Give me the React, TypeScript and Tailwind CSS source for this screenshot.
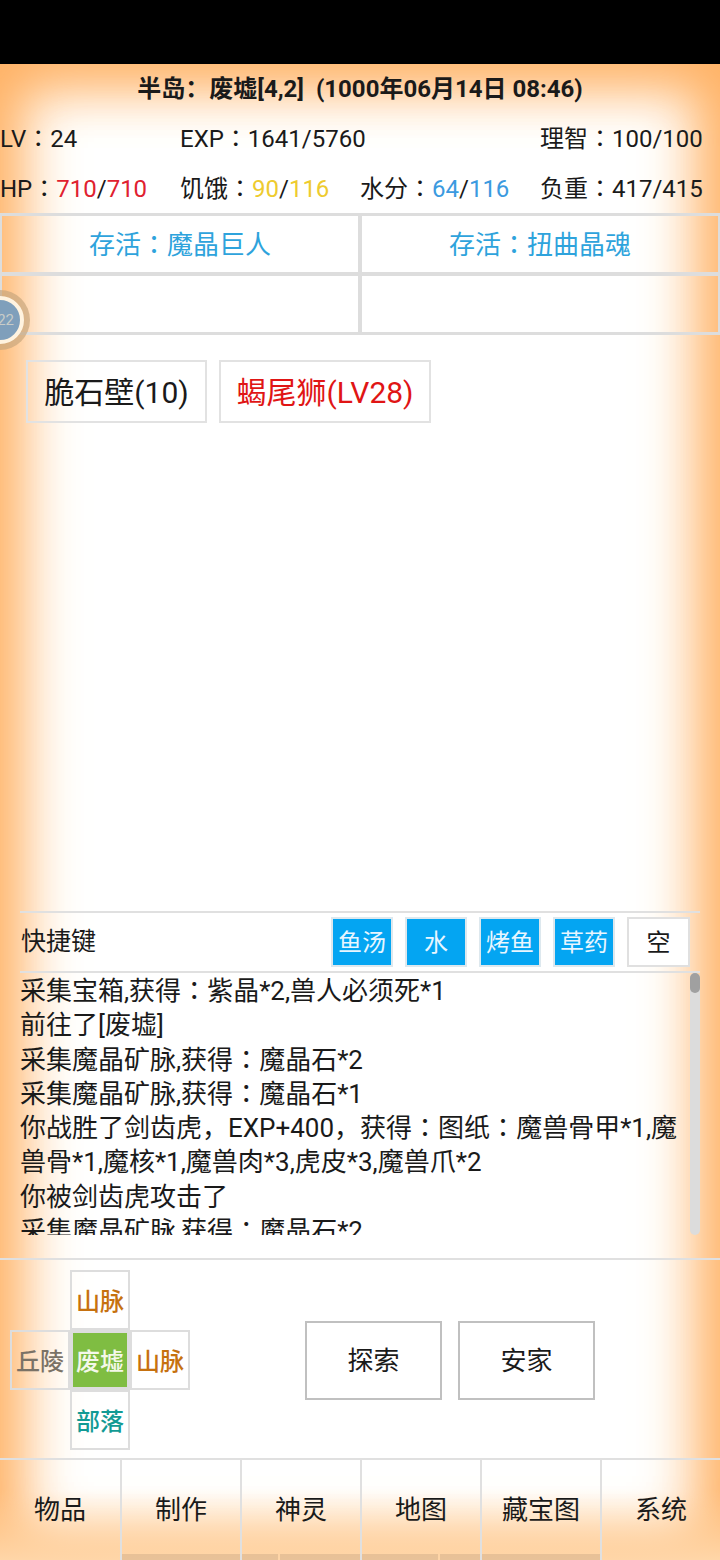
const FONT = "font-['Roboto','Noto_Sans_CJK_SC',sans-serif]";

const LOG_LINES = [
  '采集宝箱,获得：紫晶*2,兽人必须死*1',
  '前往了[废墟]',
  '采集魔晶矿脉,获得：魔晶石*2',
  '采集魔晶矿脉,获得：魔晶石*1',
  '你战胜了剑齿虎，EXP+400，获得：图纸：魔兽骨甲*1,魔兽骨*1,魔核*1,魔兽肉*3,虎皮*3,魔兽爪*2',
  '你被剑齿虎攻击了',
  '采集魔晶矿脉,获得：魔晶石*2',
];

const SHORTCUTS = ['鱼汤', '水', '烤鱼', '草药'];
const NAV = ['物品', '制作', '神灵', '地图', '藏宝图', '系统'];

// the game's colon sits centred in its cell, which is the TC glyph
function Colon() {
  return <span className="font-['Noto_Sans_CJK_TC',sans-serif] leading-[0]">：</span>;
}

function withColons(text: string) {
  const parts = text.split('：');
  return parts.map((p, i) => (
    <span key={i}>
      {i > 0 && <Colon />}
      {p}
    </span>
  ));
}

function MapCell({ label, color }: { label: string; color: string }) {
  return (
    <div className={`h-[60px] w-[60px] pt-[3px] border-2 border-[#dddddd] flex items-center justify-center text-[24px] font-medium ${color}`}>
      {label}
    </div>
  );
}

export default function App() {
  return (
    <div className={`${FONT} w-[720px] h-[1560px] bg-black text-[#1a1a1a] overflow-hidden`}>
      <div className="h-[64px] bg-black" />
      <div className="relative h-[1496px] bg-white shadow-[inset_10px_0_70px_#ffb265,inset_-10px_0_70px_#ffb265,inset_0_14px_60px_#ffd0a0] flex flex-col">
        {/* Header */}
        <div className="h-[48px] pt-[2px] flex items-center justify-center text-[24px] font-bold whitespace-pre">
          半岛：废墟[4,2]  (1000年06月14日 08:46)
        </div>
        <div className="grid grid-cols-4 h-[50px] pt-[3px] items-center text-[24px] whitespace-nowrap">
          <div>LV<Colon />24</div>
          <div className="col-span-2">EXP<Colon />1641/5760</div>
          <div>理智<Colon />100/100</div>
        </div>
        <div className="grid grid-cols-4 h-[50px] pt-[3px] items-center text-[24px] whitespace-nowrap">
          <div>HP<Colon /><span className="text-[#e0212f]">710</span>/<span className="text-[#e0212f]">710</span></div>
          <div>饥饿<Colon /><span className="text-[#eecb2e]">90</span>/<span className="text-[#eecb2e]">116</span></div>
          <div>水分<Colon /><span className="text-[#3b9ae0]">64</span>/<span className="text-[#3b9ae0]">116</span></div>
          <div>负重<Colon />417/415</div>
        </div>

        {/* Quests */}
        <div className="grid grid-cols-2 mt-[1px]">
          <div className="h-[61px] pt-[3px] border-2 border-t-[3px] border-[#dddddd] flex items-center justify-center text-[26px] text-[#2ea3dc]"><span>存活<Colon />魔晶巨人</span></div>
          <div className="h-[61px] pt-[3px] border-2 border-t-[3px] border-[#dddddd] flex items-center justify-center text-[26px] text-[#2ea3dc]"><span>存活<Colon />扭曲晶魂</span></div>
          <div className="h-[61px] border-2 border-b-[3px] border-[#dddddd]" />
          <div className="h-[61px] border-2 border-b-[3px] border-[#dddddd]" />
        </div>

        {/* Targets */}
        <div className="flex gap-3 pl-[26px] mt-[25px] text-[30px]">
          <div className="h-[63px] w-[181px] pt-[2px] border-2 border-[#e2e2e2] flex items-center justify-center whitespace-nowrap">脆石壁(10)</div>
          <div className="h-[63px] w-[212px] pt-[2px] border-2 border-[#e2e2e2] flex items-center justify-center whitespace-nowrap text-[#e01515]">蝎尾狮(LV28)</div>
        </div>

        {/* Shortcuts */}
        <div className="mt-[488px] mx-[20px] h-[62px] border-y-2 border-[#e0e0e0] flex items-center">
          <div className="flex-1 text-[25px] pl-[1px] pb-[1px]">快捷键</div>
          <div className="flex gap-[12px] pr-[10px]">
            {SHORTCUTS.map((s) => (
              <div key={s} className="h-[50px] w-[62px] pt-[2px] bg-[#04a5f2] border-2 border-[#dde8ee] flex items-center justify-center text-[24px] text-[#e8f6ff]">{s}</div>
            ))}
            <div className="h-[50px] w-[63px] pt-[2px] bg-white border-2 border-[#e0e0e0] flex items-center justify-center text-[24px]">空</div>
          </div>
        </div>

        {/* Log */}
        <div className="relative mx-[20px] h-[262px] overflow-hidden pt-[1px] pr-[10px] text-[26px] leading-[34.3px]">
          {LOG_LINES.map((l, i) => <div key={i}>{withColons(l)}</div>)}
          <div className="absolute right-0 top-0 bottom-0 w-[10px] bg-[#dcdcdc] rounded-[5px]">
            <div className="h-[20px] w-[10px] bg-[#a0a0a0] rounded-[5px]" />
          </div>
        </div>

        {/* Map and actions */}
        <div className="mt-[23px] h-[200px] border-t-2 border-[#e0e0e0] flex items-start">
          <div className="grid grid-cols-[60px_60px_60px] ml-[10px] mt-[10px]">
            <div />
            <MapCell label="山脉" color="text-[#c6710f]" />
            <div />
            <MapCell label="丘陵" color="text-[#7a7266]" />
            <div className="h-[60px] w-[60px] pt-[3px] border-[3px] border-[#dddddd] bg-[#7fbd42] flex items-center justify-center text-[24px] font-medium text-[#f4f8ea]">废墟</div>
            <MapCell label="山脉" color="text-[#c6710f]" />
            <div />
            <MapCell label="部落" color="text-[#129a94]" />
            <div />
          </div>
          <div className="flex gap-[16px] ml-[115px] mt-[61px]">
            <div className="h-[79px] w-[137px] pt-[2px] border-2 border-[#c0c0c0] flex items-center justify-center text-[26px]">探索</div>
            <div className="h-[79px] w-[137px] pt-[2px] border-2 border-[#c0c0c0] flex items-center justify-center text-[26px]">安家</div>
          </div>
        </div>

        {/* Bottom nav */}
        <div className="grid grid-cols-6 h-[102px] border-t-2 border-[#e0e0e0] bg-gradient-to-b from-transparent from-30% to-[#ffd6a8]">
          {NAV.map((n, i) => (
            <div key={n} className={`relative flex items-center justify-center text-[26px] ${i > 0 ? 'border-l-2 border-[#e0e0e0]' : ''}`}>
              {n}
              {(i === 1 || i === 4) && <div className="absolute left-0 right-0 bottom-0 h-[6px] bg-[#d8b48e]/60" />}
              {i === 2 && <div className="absolute left-0 right-0 bottom-0 h-[6px] flex gap-[2px]"><div className="w-[36px] bg-[#d8b48e]/60" /><div className="flex-1 bg-[#d8b48e]/60" /></div>}
              {i === 3 && <div className="absolute left-0 right-0 bottom-0 h-[6px] flex gap-[2px]"><div className="w-[76px] bg-[#d8b48e]/60" /><div className="flex-1 bg-[#d8b48e]/60" /></div>}
            </div>
          ))}
        </div>

        {/* Floating ball */}
        <div className="absolute left-[-30px] top-[226px] h-[60px] w-[60px] rounded-full bg-[#c9a77e]/70 flex items-center justify-center">
          <div className="h-[48px] w-[48px] rounded-full bg-[#7f9fbb] border-[4px] border-[#fff3e0] flex items-center justify-end pr-[6px] text-[15px] text-[#c8ccc8]">22</div>
        </div>
      </div>
    </div>
  );
}
